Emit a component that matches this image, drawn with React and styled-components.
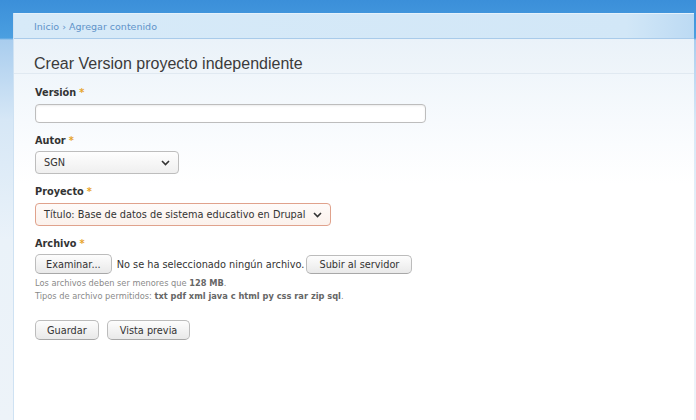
import React from "react";
import styled, { createGlobalStyle } from "styled-components";

const GlobalStyle = createGlobalStyle`
  html, body {
    margin: 0;
    padding: 0;
    height: 420px;
    overflow: hidden;
  }
  body {
    font-family: "DejaVu Sans", sans-serif;
    background: linear-gradient(
      to bottom,
      #3b8fd9 0px,
      #4b9fe0 38px,
      #a9cdee 40px,
      #d6e7f6 120px,
      #eaf2f9 240px,
      #edf3f9 420px
    );
  }
`;

const Page = styled.div`
  height: 420px;
  box-sizing: border-box;
  padding: 13px 2px 0 13px;
  display: flex;
`;

const Panel = styled.div`
  flex: 1;
  display: flex;
  flex-direction: column;
  background: #fff;
  border-left: 1px solid #cfe2f3;
`;

const Breadcrumb = styled.div`
  height: 24px;
  display: flex;
  align-items: center;
  padding-left: 20px;
  font-size: 9.5px;
  color: #5f93c9;
  background: linear-gradient(to right, #d7eaf8 0%, #d2e7f7 90%, #bcdaf3 100%);
  border-top: 1px solid #e4f1fb;
  border-bottom: 1px solid #a9cbea;
`;

const TitleBar = styled.div`
  height: 35px;
  box-sizing: border-box;
  padding: 16px 0 0 20px;
  background: linear-gradient(to bottom, #eaf2f9, #eff5fa);
  border-bottom: 1px solid #e0e9f1;
`;

const Title = styled.h1`
  margin: 0;
  font-family: "Liberation Sans", Arial, sans-serif;
  font-weight: normal;
  font-size: 16px;
  line-height: 18px;
  color: #3b3b3b;
`;

const Content = styled.div`
  flex: 1;
  padding: 12px 0 0 21px;
  background: linear-gradient(to bottom, #f0f6fb 0px, #fafcfe 70px, #fff 110px);
`;

const FormItem = styled.div`
  display: flex;
  flex-direction: column;
  align-items: flex-start;
  gap: ${(p) => p.$gap || 4}px;
  margin-bottom: 11px;
`;

const Label = styled.label`
  font-size: 9.75px;
  line-height: 14px;
  font-weight: bold;
  color: #333;
`;

const Req = styled.span`
  color: #e7a42b;
  margin-left: 3px;
`;

const TextInput = styled.div`
  width: 389px;
  height: 17px;
  border: 1px solid #bdbdbd;
  border-radius: 4px;
  background: #fff;
  box-shadow: inset 0 1px 2px rgba(0, 0, 0, 0.08);
`;

const Select = styled.div`
  width: ${(p) => p.$w}px;
  height: 21px;
  box-sizing: content-box;
  display: flex;
  align-items: center;
  justify-content: space-between;
  padding: 0 8px 0 8px;
  border: 1px solid ${(p) => (p.$error ? "#e0a28c" : "#bdbdbd")};
  border-radius: 4px;
  background: ${(p) =>
    p.$error
      ? "linear-gradient(to bottom, #fefbf9, #fbf1ec)"
      : "linear-gradient(to bottom, #fefefe, #efefef)"};
  font-size: 9.75px;
  color: #333;
`;

const Chevron = () => (
  <svg width="9" height="6" viewBox="0 0 9 6">
    <path d="M1 1l3.5 3.5L8 1" fill="none" stroke="#333" strokeWidth="1.6" />
  </svg>
);

const FileRow = styled.div`
  display: flex;
  align-items: center;
  gap: 5px;
  margin-top: -1px;
  font-size: 9.75px;
  color: #333;
`;

const FileName = styled.span`
  margin-right: -3px;
`;

const Button = styled.button`
  height: ${(p) => p.$h || 20}px;
  padding: 0 ${(p) => p.$px || 12}px;
  font-family: "DejaVu Sans", sans-serif;
  font-size: 9.75px;
  color: #333;
  border: 1px solid #bcbcbc;
  border-bottom-color: #a8a8a8;
  border-radius: 5px;
  background: linear-gradient(to bottom, #fdfdfd, #e9e9e9);
  cursor: pointer;
`;

const Help = styled.div`
  margin-top: 3px;
  font-size: 8.25px;
  line-height: 12.5px;
  color: #8a8a8a;
  b {
    color: #666;
  }
`;

const Actions = styled.div`
  display: flex;
  gap: 8px;
  margin-top: 18px;
`;

export default function App() {
  return (
    <>
      <GlobalStyle />
      <Page>
        <Panel>
          <Breadcrumb>Inicio › Agregar contenido</Breadcrumb>
          <TitleBar>
            <Title>Crear Version proyecto independiente</Title>
          </TitleBar>
          <Content>
            <FormItem>
              <Label>
                Versión<Req>*</Req>
              </Label>
              <TextInput />
            </FormItem>
            <FormItem $gap={3}>
              <Label>
                Autor<Req>*</Req>
              </Label>
              <Select $w={126}>
                SGN
                <Chevron />
              </Select>
            </FormItem>
            <FormItem>
              <Label>
                Proyecto<Req>*</Req>
              </Label>
              <Select $w={278} $error>
                Título: Base de datos de sistema educativo en Drupal
                <Chevron />
              </Select>
            </FormItem>
            <FormItem $gap={4}>
              <Label>
                Archivo<Req>*</Req>
              </Label>
              <div>
                <FileRow>
                  <Button $px={10}>Examinar...</Button>
                  <FileName>No se ha seleccionado ningún archivo.</FileName>
                  <Button $h={19} $px={12}>
                    Subir al servidor
                  </Button>
                </FileRow>
                <Help>
                  Los archivos deben ser menores que <b>128 MB</b>.
                  <br />
                  Tipos de archivo permitidos:{" "}
                  <b>txt pdf xml java c html py css rar zip sql</b>.
                </Help>
              </div>
            </FormItem>
            <Actions>
              <Button $px={11}>Guardar</Button>
              <Button $px={12}>Vista previa</Button>
            </Actions>
          </Content>
        </Panel>
      </Page>
    </>
  );
}
